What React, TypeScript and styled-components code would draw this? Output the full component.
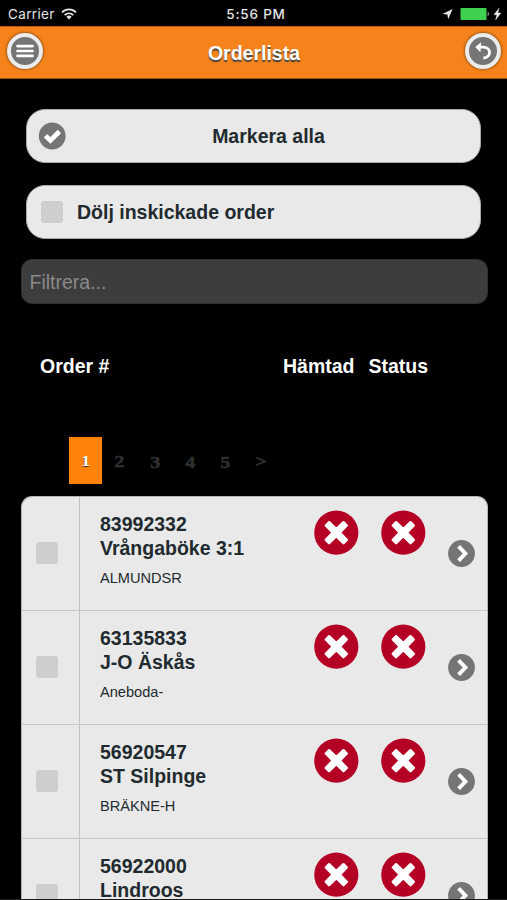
import React from "react";
import styled, { createGlobalStyle } from "styled-components";

const GlobalStyle = createGlobalStyle`
  * { box-sizing: border-box; }
  html, body { margin: 0; background: #000; overflow: hidden; }
`;

const Screen = styled.div`
  width: 507px;
  height: 900px;
  overflow: hidden;
  display: flex;
  flex-direction: column;
  background: #000;
  color: #212b2f;
  font: 700 19.5px/24px "Liberation Sans", Arial, sans-serif;
  border-bottom: 1px solid #1c1c1c;
`;

const StatusBar = styled.div`
  height: 26px;
  flex: none;
  display: grid;
  grid-template-columns: 1fr auto 1fr;
  align-items: center;
  padding: 1px 5px 0 8px;
  color: #e4e4e4;
  font: 400 13.5px/16px Inter, sans-serif;
`;

const StatusGroup = styled.div<{ $end?: boolean }>`
  display: flex;
  align-items: center;
  justify-content: ${(p) => (p.$end ? "flex-end" : "flex-start")};
  gap: ${(p) => (p.$end ? "0" : "6px")};
  svg { display: block; }
`;

const Carrier = styled.span`
  letter-spacing: 0.35px;
`;

const Clock = styled.span`
  font-weight: 500;
  letter-spacing: 0.8px;
  padding-left: 2px;
`;

const Header = styled.header`
  height: 53px;
  flex: none;
  display: flex;
  justify-content: space-between;
  padding: 6px 6px 0 7px;
  background: #f5821a;
  border-top: 1px solid #b85f10;
  border-bottom: 1px solid #9a510f;
`;

const Title = styled.h1`
  margin: 8px 0 0;
  font-size: 19.5px;
  line-height: 24px;
  color: #fff;
  text-shadow: 0 1.5px 1px #444;
`;

const RoundButton = styled.button`
  width: 36px;
  height: 36px;
  padding: 0;
  border: 4px solid #ececec;
  border-radius: 50%;
  background: #757575;
  box-shadow: 0 0 2px 1px rgba(90, 60, 30, 0.55);
  svg { display: block; }
`;

const Options = styled.div`
  flex: none;
  display: flex;
  flex-direction: column;
  gap: 22px;
  padding: 30px 26px 0;
`;

const Option = styled.div`
  height: 54px;
  display: flex;
  align-items: center;
  padding: 0 12px;
  background: #e9e9e9;
  border: 1px solid #aaa;
  border-radius: 19px;
  svg { display: block; flex: none; overflow: visible; }
`;

const OptionLabel = styled.span<{ $centered?: boolean }>`
  flex: 1;
  text-align: ${(p) => (p.$centered ? "center" : "left")};
  padding-left: ${(p) => (p.$centered ? "3px" : "14px")};
`;

const Checkbox = styled.span`
  width: 22px;
  height: 22px;
  flex: none;
  border-radius: 3px;
  background: #cecece;
`;

const OptionCheckbox = styled(Checkbox)`
  margin-left: 2px;
`;

const Filter = styled.input`
  height: 45px;
  flex: none;
  margin: 20px 19px 0 20.5px;
  padding: 1px 8px 0;
  border: 1px solid #303030;
  border-radius: 11px;
  outline: 0;
  background: #3d3d3d;
  color: #fff;
  font: 400 19.5px "Liberation Sans", Arial, sans-serif;
  &::placeholder { color: #8a8a8a; opacity: 1; }
`;

const Columns = styled.div`
  flex: none;
  display: grid;
  grid-template-columns: 243px 85.5px auto;
  margin: 49.5px 0 0 40px;
  height: 24px;
  color: #fff;
`;

const Pager = styled.nav`
  flex: none;
  display: flex;
  margin: 59px 0 12px 69px;
  height: 47px;
`;

const Page = styled.span<{ $active?: boolean; $drop?: number }>`
  width: ${(p) => (p.$active ? "33px" : "35.2px")};
  height: 47px;
  padding-top: ${(p) => 13 + (p.$drop ?? 0)}px;
  text-align: center;
  background: ${(p) => (p.$active ? "#ff830a" : "transparent")};
  color: ${(p) => (p.$active ? "#fff" : "#303030")};
  text-shadow: ${(p) => (p.$active ? "0 1px 1px #333" : "none")};
  -webkit-text-stroke: ${(p) => (p.$active ? "0" : "0.5px #303030")};
  font: 700 ${(p) => (p.$active ? "15px" : "17px")}/22px "Liberation Serif", serif;
`;

const Digit = styled.span`
  display: inline-block;
  transform: scaleX(1.18);
`;

const List = styled.div`
  flex: none;
  margin: 0 19px 0 21px;
  border: 1px solid #b4b4b4;
  border-bottom: 0;
  border-radius: 11px 11px 0 0;
  overflow: hidden;
  background: #e9e9e9;
`;

const Row = styled.div`
  height: 114px;
  display: grid;
  grid-template-columns: 58px 214px 67px 67px 1fr;
  border-bottom: 1.5px solid #c8c8c8;
`;

const SelectCell = styled.div`
  display: flex;
  align-items: center;
  padding: 0 0 0 14px;
  border-right: 1px solid #c2c2c2;
`;

const OrderCell = styled.div`
  padding: 15px 0 0 20px;
  line-height: 24.5px;
  white-space: nowrap;
`;

const Place = styled.div`
  margin-top: 8px;
  font-weight: 400;
  font-size: 14.6px;
  line-height: 18px;
`;

const IconCell = styled.div`
  padding: 13px 0 0 20px;
  svg { display: block; }
`;

const ArrowCell = styled.div`
  display: flex;
  align-items: center;
  padding: 1px 0 0 20px;
`;

const orders = [
  { id: "83992332", name: "Vrångaböke 3:1", place: "ALMUNDSR" },
  { id: "63135833", name: "J-O Äskås", place: "Aneboda-" },
  { id: "56920547", name: "ST Silpinge", place: "BRÄKNE-H" },
  { id: "56922000", name: "Lindroos", place: "" },
];

const pages = [
  { label: "2", drop: 1 },
  { label: "3", drop: 2 },
  { label: "4", drop: 2 },
  { label: "5", drop: 2 },
  { label: ">", drop: 1 },
];

const Cross = () => (
  <svg width="45" height="45" viewBox="0 0 45 45">
    <circle cx="22.3" cy="22.7" r="22.1" fill="#b50025" />
    <path
      d="M11.8 15.5 15.1 12.2 22.3 19.2 29.5 12.2 32.8 15.5 25.8 22.7 32.8 29.9 29.5 33.2 22.3 26.2 15.1 33.2 11.8 29.9 18.8 22.7Z"
      fill="#fff"
      stroke="#fff"
      strokeWidth="2.4"
      strokeLinejoin="round"
    />
  </svg>
);

const Arrow = () => (
  <svg width="27" height="27" viewBox="0 0 27 27">
    <circle cx="13.5" cy="13.5" r="13.4" fill="#757575" />
    <path d="M10.6 6.4 17.4 13.5 10.6 20.6" fill="none" stroke="#fff" strokeWidth="3.9" />
  </svg>
);

export default function App() {
  return (
    <Screen>
      <GlobalStyle />
      <StatusBar>
        <StatusGroup>
          <Carrier>Carrier</Carrier>
          <svg width="16" height="12" viewBox="0 0 16 12" fill="none" stroke="#e4e4e4" strokeWidth="1.8">
            <path d="M1 4.4C5 .4 11 .4 15 4.4M3.7 7.1C6.2 4.7 9.8 4.7 12.3 7.1" />
            <path d="M5.4 8.7Q8 6.5 10.6 8.7L8 11.4Z" fill="#e4e4e4" stroke="none" />
          </svg>
        </StatusGroup>
        <Clock>5:56 PM</Clock>
        <StatusGroup $end>
          <svg width="62" height="14" viewBox="0 0 62 14">
            <path d="M2.5 7.1 12.6 2 8.2 12.2 7.4 7.6Z" fill="#e8e8e8" />
            <rect x="20.5" y="1" width="26" height="12" rx="1" fill="#3fd04f" />
            <path d="M47.7 4.8Q50.4 7 47.7 9.2Z" fill="#aaa" />
            <path d="M58.9 1.4 54 7.7H57L55.7 12.7 60.8 6H57.7Z" fill="#eee" stroke="#eee" strokeWidth=".5" />
          </svg>
        </StatusGroup>
      </StatusBar>

      <Header>
        <RoundButton aria-label="Meny">
          <svg width="28" height="28" viewBox="0 0 28 28">
            <path d="M6.5 9.1H21.5M6.5 14H21.5M6.5 18.9H21.5" stroke="#fff" strokeWidth="2.7" strokeLinecap="round" />
          </svg>
        </RoundButton>
        <Title>Orderlista</Title>
        <RoundButton aria-label="Tillbaka">
          <svg width="28" height="28" viewBox="0 0 28 28">
            <path d="M10 10.2H14C22.6 10.2 22.8 20.2 14.3 21.2" fill="none" stroke="#fff" strokeWidth="2.8" />
            <path d="M6.2 10 12.2 5.2 11.4 15.2Z" fill="#fff" />
          </svg>
        </RoundButton>
      </Header>

      <Options>
        <Option>
          <svg width="27" height="27" viewBox="0 0 27 27">
            <circle cx="13.2" cy="13" r="13.4" fill="#757575" />
            <path d="M6.5 12.8 11.4 17.5 20.4 8.5" fill="none" stroke="#fff" strokeWidth="4.8" />
          </svg>
          <OptionLabel $centered>Markera alla</OptionLabel>
        </Option>
        <Option>
          <OptionCheckbox />
          <OptionLabel>Dölj inskickade order</OptionLabel>
        </Option>
      </Options>

      <Filter placeholder="Filtrera..." />

      <Columns>
        <span>Order #</span>
        <span>Hämtad</span>
        <span>Status</span>
      </Columns>

      <Pager>
        <Page $active><Digit>1</Digit></Page>
        {pages.map((page) => (
          <Page key={page.label} $drop={page.drop}><Digit>{page.label}</Digit></Page>
        ))}
      </Pager>

      <List>
        {orders.map((order) => (
          <Row key={order.id}>
            <SelectCell><Checkbox /></SelectCell>
            <OrderCell>
              <div>{order.id}</div>
              <div>{order.name}</div>
              <Place>{order.place}</Place>
            </OrderCell>
            <IconCell><Cross /></IconCell>
            <IconCell><Cross /></IconCell>
            <ArrowCell><Arrow /></ArrowCell>
          </Row>
        ))}
      </List>
    </Screen>
  );
}
